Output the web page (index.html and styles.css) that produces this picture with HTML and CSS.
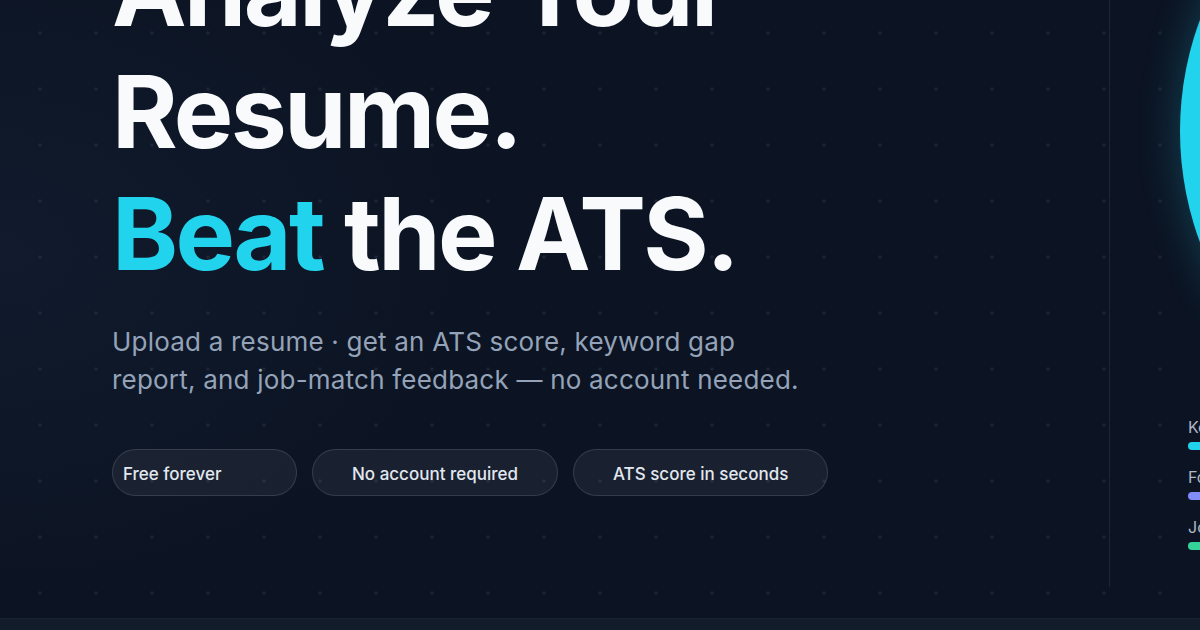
FILE: index.html
```html
<!DOCTYPE html>
<html lang="en">
<head>
<meta charset="utf-8">
<title>Analyze Your Resume. Beat the ATS.</title>
<link rel="stylesheet" href="styles.css">
</head>
<body>
<div class="page">
  <section class="hero">
    <div class="hero-left">
      <h1 class="title">
        <span class="line">Analyze Your</span>
        <span class="line">Resume.</span>
        <span class="line"><span class="accent">Beat</span> the ATS.</span>
      </h1>
      <p class="lead">Upload a resume · get an ATS score, keyword gap report, and job-match feedback — no account needed.</p>
      <div class="pills">
        <span class="pill pill-first">Free forever</span>
        <span class="pill">No account required</span>
        <span class="pill">ATS score in seconds</span>
      </div>
    </div>
    <aside class="hero-right">
      <div class="score-orb"></div>
      <ul class="metrics">
        <li class="metric"><span class="metric-label">Keyword match</span><span class="bar bar-cyan"></span></li>
        <li class="metric"><span class="metric-label">Formatting</span><span class="bar bar-indigo"></span></li>
        <li class="metric"><span class="metric-label">Job fit</span><span class="bar bar-green"></span></li>
      </ul>
    </aside>
  </section>
  <div class="next-section"></div>
</div>
</body>
</html>
```

FILE: styles.css
```css
* { box-sizing: border-box; }
html, body {
  margin: 0;
  padding: 0;
  width: 1200px;
  height: 630px;
  overflow: hidden;
  background: #0c1423;
}
body {
  font-family: Inter, "Noto Sans", "Liberation Sans", sans-serif;
  color: #f8fafc;
}
.page {
  width: 1200px;
  height: 630px;
  display: flex;
  flex-direction: column;
  background-color: #0c1423;
  background-image:
    radial-gradient(circle at 28px 28px, rgba(148, 163, 184, 0.11) 1.3px, transparent 2px),
    radial-gradient(ellipse 700px 500px at 0% 40%, rgba(20, 32, 52, 0.55), transparent 70%);
  background-size: 56px 56px, 100% 100%;
  background-position: 12px 5px, 0 0;
  overflow: hidden;
}
.hero {
  flex: 0 0 618px;
  display: grid;
  grid-template-columns: 1109px 91px;
  overflow: hidden;
}
.hero-left {
  padding-left: 112px;
  margin-top: -71px;
}
.title {
  margin: 0;
  font-size: 100px;
  line-height: 122px;
  font-weight: 700;
  letter-spacing: -0.026em;
  color: #f8fafc;
}
.line { display: block; white-space: nowrap; }
.accent { color: #22d3ee; }
.lead {
  margin: 28px 0 0;
  width: 700px;
  font-size: 26px;
  line-height: 38px;
  letter-spacing: 0.008em;
  color: #94a3b8;
  font-weight: 400;
}
.pills {
  margin-top: 50px;
  display: flex;
  gap: 15px;
}
.pill {
  display: inline-flex;
  align-items: center;
  justify-content: center;
  height: 47px;
  padding: 2px 39px 0;
  border-radius: 24px;
  border: 1px solid rgba(148, 163, 184, 0.22);
  background: rgba(255, 255, 255, 0.055);
  color: #e2e8f0;
  font-size: 17px;
  font-weight: 500;
  white-space: nowrap;
}
.pill-first {
  justify-content: flex-start;
  width: 185px;
  padding: 2px 10px 0;
}
.hero-right {
  position: relative;
  height: 587px;
  border-left: 1px solid #1c2637;
}
.score-orb {
  position: absolute;
  left: 70px;
  top: -189px;
  width: 640px;
  height: 640px;
  border-radius: 50%;
  background: #22d3ee;
  box-shadow: 0 0 40px rgba(34, 211, 238, 0.25);
}
.metrics {
  list-style: none;
  margin: 0;
  padding: 418px 0 0 78px;
  display: flex;
  flex-direction: column;
  gap: 18px;
}
.metric {
  display: flex;
  flex-direction: column;
  gap: 5px;
  white-space: nowrap;
}
.metric-label {
  font-size: 16px;
  line-height: 19px;
  color: #aeb8c6;
}
.bar {
  display: block;
  width: 200px;
  height: 8px;
  border-radius: 4px;
}
.bar-cyan { background: #22d3ee; }
.bar-indigo { background: #818cf8; }
.bar-green { background: #34d399; }
.next-section {
  flex: 1;
  background: #131c2b;
  border-top: 1px solid #182234;
}
```
